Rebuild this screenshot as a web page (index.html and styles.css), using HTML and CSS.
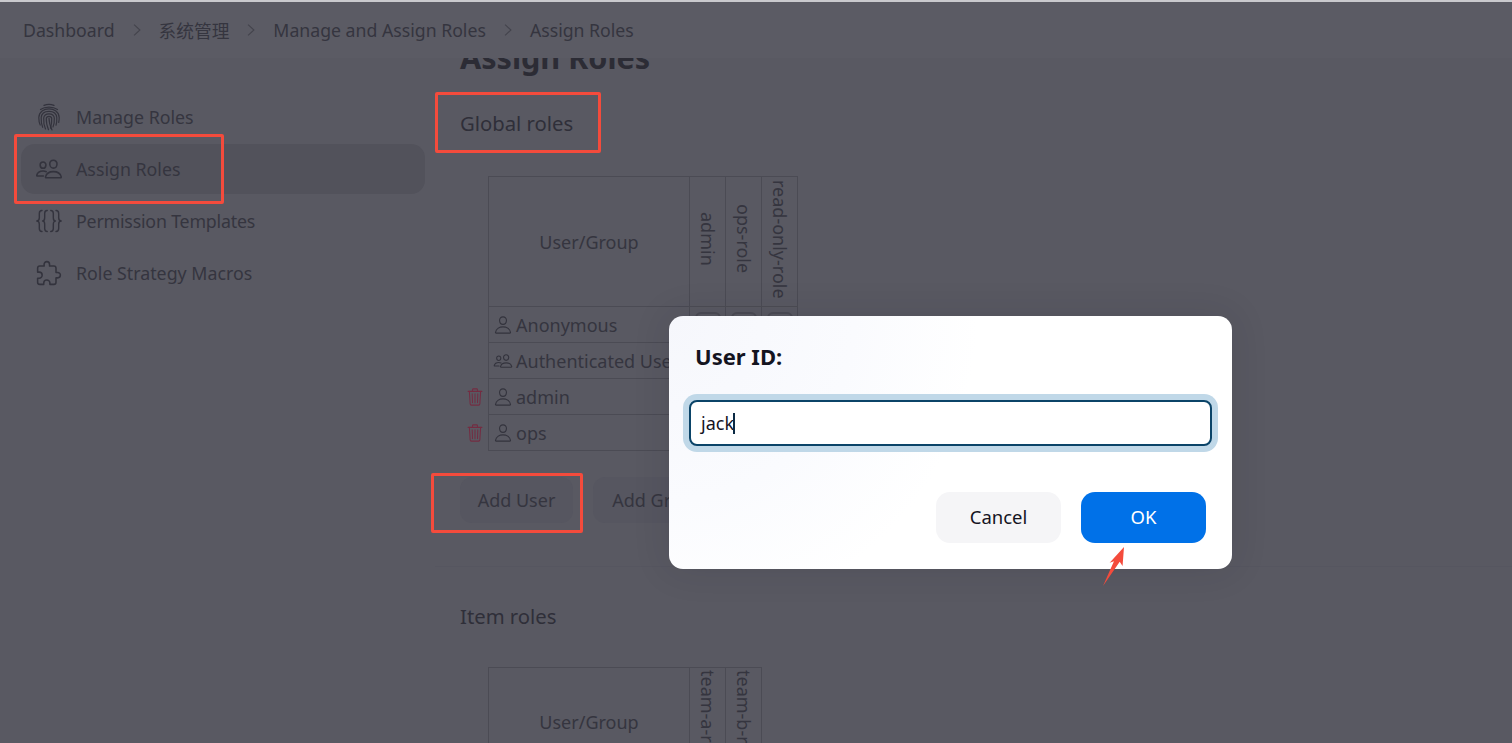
FILE: index.html
```html
<!DOCTYPE html>
<html lang="en">
<head>
<meta charset="utf-8">
<title>Assign Roles</title>
<link rel="stylesheet" href="styles.css">
</head>
<body>
<svg class="sprites" width="0" height="0">
  <symbol id="i-person" viewBox="0 0 512 512"><path d="M344 144c-3.92 52.87-44 96-88 96s-84.15-43.12-88-96c-4-55 35-96 88-96s92 42 88 96z"/><path d="M256 304c-87 0-175.3 48-191.64 138.6C62.39 453.52 68.57 464 80 464h352c11.44 0 17.62-10.48 15.65-21.4C431.3 352 343 304 256 304z"/></symbol>
  <symbol id="i-people" viewBox="0 0 512 512"><path d="M402 168c-2.93 40.67-33.1 72-66 72s-63.12-31.32-66-72c-3-42.31 26.37-72 66-72s69 30.46 66 72z"/><path d="M336 304c-65.17 0-127.84 32.37-143.54 95.41-2.08 8.34 3.15 16.59 11.72 16.59h263.65c8.57 0 13.77-8.25 11.72-16.59C463.85 335.36 401.18 304 336 304z"/><path d="M200 185.94c-2.34 32.48-26.72 58.06-53 58.06s-50.7-25.57-53-58.06C91.61 152.15 115.34 128 147 128s55.39 24.77 53 57.94z"/><path d="M206 306c-18.05-8.27-37.93-11.45-59-11.45-52 0-102.1 25.85-114.65 76.2-1.65 6.66 2.53 13.25 9.37 13.25H154"/></symbol>
  <symbol id="i-trash" viewBox="0 0 512 512"><path d="M112 112l20 320c.95 18.49 14.4 32 32 32h184c17.67 0 30.87-13.51 32-32l20-320"/><path d="M80 112h352"/><path d="M192 112V72a24 24 0 0124-24h80a24 24 0 0124 24v40"/><path d="M256 176v224M184 176l8 224M328 176l-8 224"/></symbol>
  <symbol id="i-chevron" viewBox="0 0 12 16"><path d="M2.5 1.5L9.5 8l-7 6.500"/></symbol>
</svg>

<header class="breadcrumbs">
  <span>Dashboard</span>
  <svg class="chev"><use href="#i-chevron"/></svg>
  <span>系统管理</span>
  <svg class="chev"><use href="#i-chevron"/></svg>
  <span>Manage and Assign Roles</span>
  <svg class="chev"><use href="#i-chevron"/></svg>
  <span>Assign Roles</span>
</header>

<div class="page">
  <nav class="sidebar">
    <a class="task">
      <svg class="task-icon task-icon-thin" viewBox="-2 0 28 28"><path d="M7 2.400c3-1.300 7-1.300 10 0"/><path d="M3.500 6.500C8 3.300 16 3.300 20.500 6.500"/><path d="M3.200 22C2 19.500 1.800 17 1.800 14.500 2 8.500 7 5.800 12 5.800s10 2.700 10.200 8.700c0 2-.1 3.500-.5 5"/><path d="M5.700 24.300C4.400 21 4 18 4.200 14.700 4.500 10.200 8 8.300 12 8.300s7.500 1.900 7.800 6.400c.1 2.500 0 5-.8 7.500"/><path d="M8.500 26C6.800 22 6.500 18 6.700 15 7 12 9 10.800 12 10.800s5 1.200 5.300 4.200c.2 3-.1 6-1.300 9"/><path d="M11.500 26.700C9.700 22 9.100 18.500 9.300 15.400c.1-1.400 1.200-2.100 2.700-2.100s2.600.7 2.700 2.100c.2 3-.1 6-1.200 9.800"/><path d="M15 27c-1.800-4-3-8-3-11.800"/></svg>
      <span>Manage Roles</span>
    </a>
    <a class="task task-active">
      <svg class="task-icon"><use href="#i-people"/></svg>
      <span>Assign Roles</span>
    </a>
    <a class="task">
      <svg class="task-icon task-icon-thin" viewBox="0 0 24 24"><path d="M6 3C4 3 3.700 4 3.700 5.500v3.800C3.700 11 3 12 1.500 12c1.500 0 2.200 1 2.200 2.700v3.800C3.700 20 4 21 6 21"/><path d="M10.500 3C8.800 3 8.300 4 8.300 5.500v3.800c0 1.700-.8 2.700-1.800 2.700 1 0 1.800 1 1.800 2.700v3.800c0 1.500.5 2.500 2.200 2.500"/><path d="M13.500 3c1.700 0 2.200 1 2.200 2.500v3.800c0 1.700.8 2.700 1.800 2.700-1 0-1.800 1-1.800 2.700v3.800c0 1.500-.5 2.500-2.200 2.500"/><path d="M18 3c2 0 2.300 1 2.300 2.500v3.800c0 1.700.7 2.700 2.200 2.700-1.500 0-2.200 1-2.200 2.700v3.800C20.300 20 20 21 18 21"/></svg>
      <span class="tight">Permission Templates</span>
    </a>
    <a class="task">
      <svg class="task-icon" viewBox="0 0 512 512"><path d="M413.66 246.1H386a2 2 0 01-2-2v-77.24A38.86 38.86 0 00345.14 128H267.9a2 2 0 01-2-2V98.34c0-27.14-21.5-49.86-48.64-50.33a49.53 49.53 0 00-50.4 49.51V126a2 2 0 01-2 2H87.62A39.74 39.74 0 0048 167.62V238a2 2 0 002 2h26.91c29.37 0 53.68 25.48 54.09 54.85.42 29.87-23.51 57.15-53.29 57.15H50a2 2 0 00-2 2v70.38A39.74 39.74 0 0087.62 464H158a2 2 0 002-2v-20.93c0-30.28 24.75-56.35 55-57.06 30.1-.7 57 20.31 57 50.28V462a2 2 0 002 2h71.14A38.86 38.86 0 00384 425.14v-78a2 2 0 012-2h28.48c27.63 0 49.52-22.67 49.52-50.4s-23.2-48.64-50.34-48.64z"/></svg>
      <span>Role Strategy Macros</span>
    </a>
  </nav>

  <main class="content">
    <h1 class="title">Assign Roles</h1>
    <h2 class="section-title">Global roles</h2>
    <div class="table-wrap">
      <table class="roles">
        <thead>
          <tr class="head-global">
            <th class="col-user">User/Group</th>
            <th class="col-role"><span class="vert">admin</span></th>
            <th class="col-role"><span class="vert">ops-role</span></th>
            <th class="col-role"><span class="vert">read-only-role</span></th>
          </tr>
        </thead>
        <tbody>
          <tr>
            <td class="cell-user"><svg class="u-icon"><use href="#i-person"/></svg>Anonymous</td>
            <td class="cell-check"><i class="check"></i></td><td class="cell-check"><i class="check"></i></td><td class="cell-check"><i class="check"></i></td>
          </tr>
          <tr>
            <td class="cell-user"><svg class="u-icon"><use href="#i-people"/></svg>Authenticated Users</td>
            <td class="cell-check"><i class="check"></i></td><td class="cell-check"><i class="check"></i></td><td class="cell-check"><i class="check"></i></td>
          </tr>
          <tr>
            <td class="cell-user"><svg class="del"><use href="#i-trash"/></svg><svg class="u-icon"><use href="#i-person"/></svg>admin</td>
            <td class="cell-check"><i class="check"></i></td><td class="cell-check"><i class="check"></i></td><td class="cell-check"><i class="check"></i></td>
          </tr>
          <tr>
            <td class="cell-user"><svg class="del"><use href="#i-trash"/></svg><svg class="u-icon"><use href="#i-person"/></svg>ops</td>
            <td class="cell-check"><i class="check"></i></td><td class="cell-check"><i class="check"></i></td><td class="cell-check"><i class="check"></i></td>
          </tr>
        </tbody>
      </table>
    </div>
    <div class="actions">
      <button class="btn-ghost">Add User</button>
      <button class="btn-ghost">Add Group</button>
    </div>
    <hr class="divider">
    <h2 class="section-title item-title">Item roles</h2>
    <div class="table-wrap table-wrap-item">
      <table class="roles">
        <thead>
          <tr class="head-item">
            <th class="col-user">User/Group</th>
            <th class="col-role"><span class="vert">team-a-role</span></th>
            <th class="col-role"><span class="vert">team-b-role</span></th>
          </tr>
        </thead>
      </table>
    </div>
  </main>
</div>

<div class="note note-assign"></div>
<div class="note note-global"></div>
<div class="note note-add"></div>

<section class="dialog">
  <h3 class="dialog-title">User ID:</h3>
  <div class="field"><span class="field-text">jack</span><span class="caret"></span></div>
  <div class="dialog-buttons">
    <button class="btn btn-cancel">Cancel</button>
    <button class="btn btn-ok">OK</button>
  </div>
</section>

<svg class="note-arrow" viewBox="0 0 24 44"><path d="M1 43L12.500 17 8 18.500 23 2l-1.500 20-3-4.500z"/></svg>
</body>
</html>
```
FILE: styles.css
```css
* { box-sizing: border-box; }
html, body { margin: 0; height: 743px; overflow: hidden; }
body {
  position: relative;
  background: #595962;
  color: #2f2f39;
  font-family: "Noto Sans", "Noto Sans CJK SC", sans-serif;
  font-size: 18px;
  border-top: 2px solid #c9c9cd;
}
.sprites { position: absolute; }

.breadcrumbs {
  position: relative;
  z-index: 2;
  display: flex;
  align-items: center;
  gap: 17px;
  height: 56px;
  padding-left: 23px;
  background: #5b5b64;
  color: #35353f;
  font-size: 17.700px;
}
.chev { width: 10px; height: 14px; fill: none; stroke: #43434c; stroke-width: 1.300; }

.page { display: flex; }
.sidebar { display: flex; flex-direction: column; gap: 2px; width: 425px; padding: 34px 0 0 21px; flex: none; }
.task {
  display: flex;
  align-items: center;
  gap: 13px;
  height: 50px;
  padding-left: 14px;
  border-radius: 14px;
  color: #35353f;
  font-size: 17.800px;
}
.tight { letter-spacing: -.2px; }
.task-active { background: #52525b; }
.task-icon { width: 28px; height: 28px; fill: none; stroke: #33333d; stroke-width: 28; stroke-linecap: round; stroke-linejoin: round; }
.task-icon-thin { stroke-width: 1.200; }

.content { flex: 1; min-width: 0; padding-left: 35px; }
.title { margin: -21px 0 0; font-size: 30.600px; line-height: 40px; font-weight: 700; color: #2c2c35; }
.section-title { margin: 31px 0 0; font-size: 20.300px; line-height: 30px; font-weight: 400; color: #2f2f39; }
.item-title { margin-top: 34px; }
.table-wrap { margin: 38px 0 0 28px; }
.table-wrap-item { margin-top: 36px; }
.roles { border-collapse: collapse; color: #35353f; font-size: 18px; }
.roles th, .roles td { border: 1px solid #4b4b54; padding: 0; font-weight: 400; }
.head-global { height: 130px; }
.head-item { height: 108px; }
.col-user { width: 201px; }
.col-role { width: 36px; vertical-align: middle; }
.vert { display: inline-block; writing-mode: vertical-rl; line-height: 34px; }
.roles tbody tr { height: 36px; }
.cell-user { position: relative; padding: 1px 0 0 4px !important; line-height: 34px; white-space: nowrap; }
.u-icon { width: 20px; height: 20px; margin-right: 3px; vertical-align: -3px; fill: none; stroke: #33333d; stroke-width: 28; stroke-linecap: round; stroke-linejoin: round; }
.del { position: absolute; left: -24px; top: 8px; width: 20px; height: 20px; fill: none; stroke: #742c42; stroke-width: 26; stroke-linecap: round; stroke-linejoin: round; }
.cell-check { text-align: center; }
.check { display: block; width: 26px; height: 26px; margin: 0 auto; border: 2px solid #4b4b54; border-radius: 6px; }

.actions { display: flex; gap: 20px; margin-top: 26px; }
.btn-ghost {
  width: 113px;
  height: 46px;
  border: 0;
  border-radius: 12px;
  background: #565660;
  color: #35353f;
  font: inherit;
  font-size: 18px;
}
.btn-ghost + .btn-ghost { width: 130px; }
.divider { margin: 43px 0 0 -25px; border: 0; border-top: 1px solid #565660; }

.note { position: absolute; z-index: 3; border: 3px solid #f44b3c; border-radius: 2px; }
.note-assign { left: 14px; top: 132px; width: 210px; height: 70px; }
.note-global { left: 435px; top: 90px; width: 166px; height: 61px; }
.note-add { left: 431px; top: 471px; width: 152px; height: 60px; }

.dialog {
  position: absolute;
  z-index: 4;
  left: 669px;
  top: 314px;
  width: 563px;
  height: 253px;
  padding: 23px 20px 0;
  border-radius: 14px;
  background: radial-gradient(circle at 0 0, #f6f7fc 0, #fafbfe 30%, #fff 50%);
  box-shadow: 0 0 36px rgba(30, 30, 40, .14);
  color: #14141f;
}
.dialog-title { margin: 0 0 0 6px; font-size: 22px; line-height: 34px; font-weight: 700; }
.field {
  display: flex;
  align-items: center;
  height: 46px;
  margin-top: 27px;
  padding-left: 10px;
  border: 2px solid #0b4468;
  border-radius: 8px;
  background: #fff;
  box-shadow: 0 0 0 6px #c0d8e8;
  font-size: 18px;
}
.caret { width: 2px; height: 21px; margin-left: -1px; background: #0b2a44; }
.dialog-buttons { display: flex; justify-content: flex-end; gap: 20px; margin-top: 46px; padding-right: 6px; }
.btn { width: 125px; height: 51px; padding-bottom: 4px; border: 0; border-radius: 14px; font: inherit; font-size: 18.500px; }
.btn-cancel { background: #f5f5f7; color: #14141f; }
.btn-ok { background: #0071e8; color: #fff; }

.note-arrow { position: absolute; z-index: 5; left: 1101px; top: 543px; width: 25px; height: 42px; }
.note-arrow path { fill: #f44b3c; }
```
